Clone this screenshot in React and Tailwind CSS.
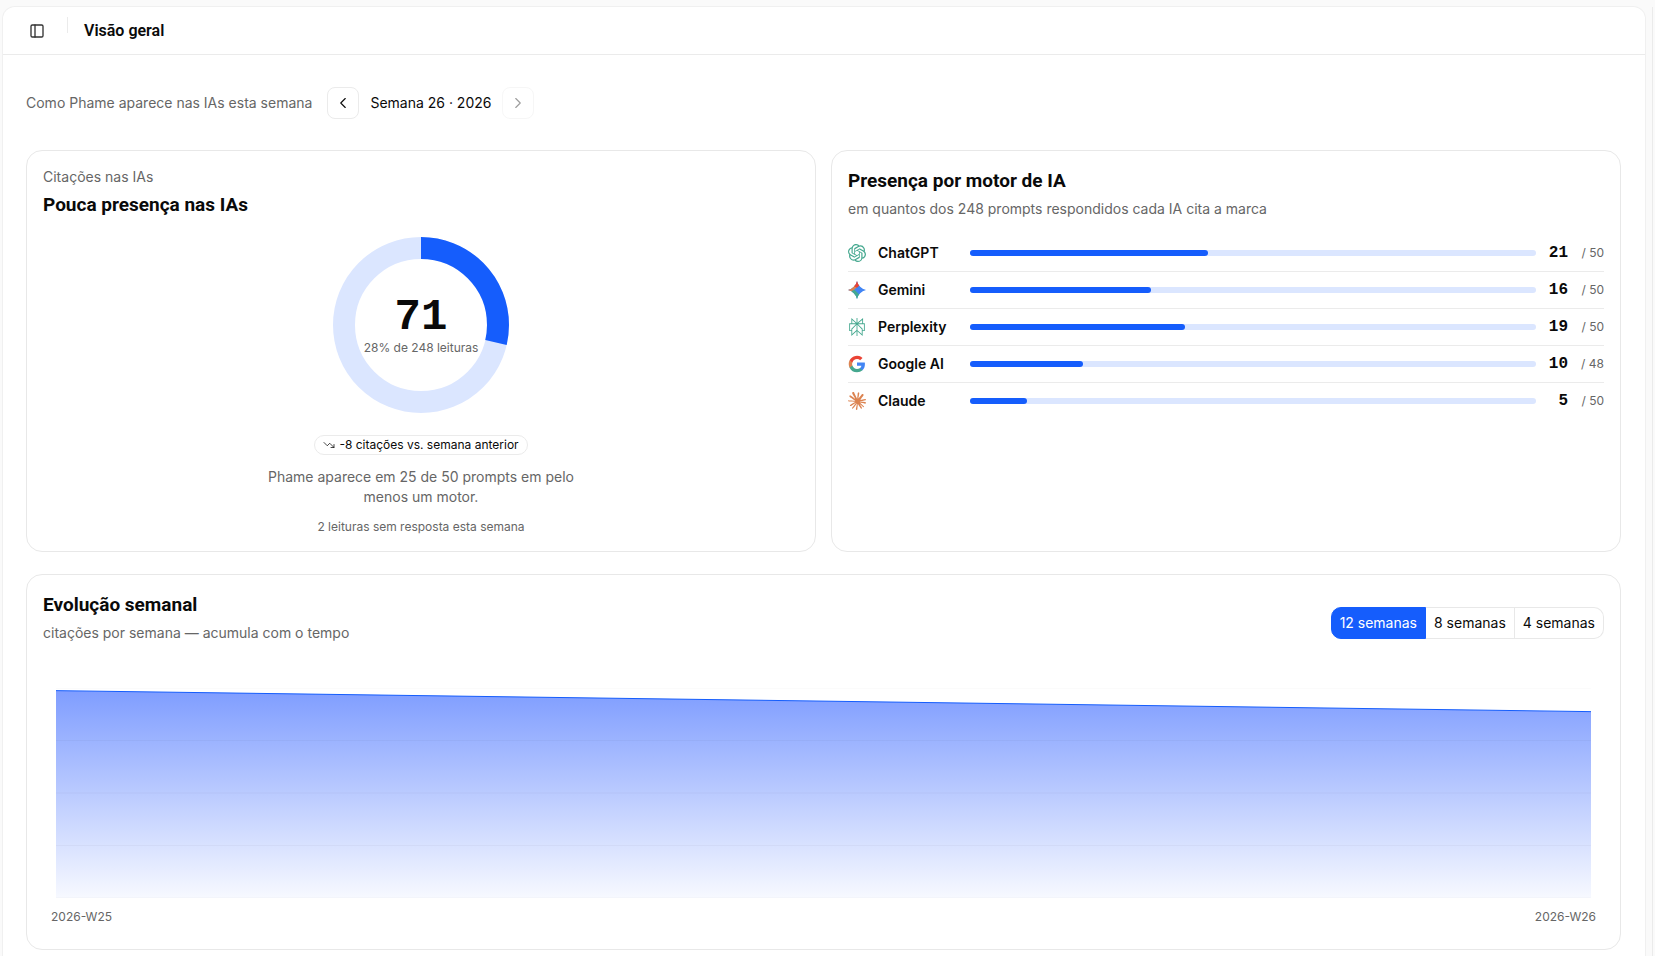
import React, { useState } from "react";
import { ChevronLeft, ChevronRight, PanelLeft, TrendingDown } from "lucide-react";
import { SiOpenai, SiPerplexity, SiClaude } from "react-icons/si";

const GoogleLogo = () => (
  <svg viewBox="0 0 24 24" className="size-[18px]">
    <path
      fill="#4285f4"
      d="M22.56 12.25c0-.78-.07-1.53-.2-2.25H12v4.26h5.92a5.06 5.06 0 0 1-2.2 3.32v2.77h3.57c2.08-1.92 3.27-4.74 3.27-8.1z"
    />
    <path
      fill="#45a88f"
      d="M12 23c2.97 0 5.46-.98 7.28-2.66l-3.57-2.77c-.98.66-2.23 1.06-3.71 1.06-2.86 0-5.29-1.93-6.16-4.53H2.18v2.84A11 11 0 0 0 12 23z"
    />
    <path
      fill="#dc8350"
      d="M5.84 14.09a6.6 6.6 0 0 1 0-4.18V7.07H2.18a11 11 0 0 0 0 9.86l3.66-2.84z"
    />
    <path
      fill="#ea4335"
      d="M12 5.38c1.62 0 3.06.56 4.21 1.64l3.15-3.15A11 11 0 0 0 2.18 7.07l3.66 2.84C6.71 7.31 9.14 5.38 12 5.38z"
    />
  </svg>
);

const GeminiLogo = () => (
  <svg viewBox="0 0 24 24" className="size-[18px]">
    <defs>
      <clipPath id="gemini-star">
        <path d="M12 0c1.6 6.3 5.7 10.4 12 12-6.300 1.600-10.400 5.700-12 12-1.600-6.300-5.700-10.400-12-12C6.300 10.400 10.400 6.300 12 0z" />
      </clipPath>
    </defs>
    <g clipPath="url(#gemini-star)">
      <path fill="#4285f4" d="M0 0h24v24H0z" />
      <path fill="#dc8350" d="M0 4h9l3 4-6 6H0z" />
      <path fill="#ea4335" d="M8 0h8v5l-4 4-4-2z" />
      <path fill="#45a88f" d="M5 13l4-1 6 6v6H8z" />
    </g>
  </svg>
);

const engines = [
  {
    name: "ChatGPT",
    cited: 21,
    total: 50,
    icon: <SiOpenai className="size-[18px] text-[#45a88f]" />,
  },
  { name: "Gemini", cited: 16, total: 50, icon: <GeminiLogo /> },
  {
    name: "Perplexity",
    cited: 19,
    total: 50,
    icon: <SiPerplexity className="size-[18px] text-[#45a88f]" />,
  },
  { name: "Google AI", cited: 10, total: 48, icon: <GoogleLogo /> },
  {
    name: "Claude",
    cited: 5,
    total: 50,
    icon: <SiClaude className="size-[18px] text-[#dc8350]" />,
  },
];

const MAX_PROMPTS = 50;

const Donut = ({ value, total }) => {
  const radius = 77;
  const circumference = 2 * Math.PI * radius;

  return (
    <div className="relative size-44">
      <svg viewBox="0 0 176 176" className="size-44 -rotate-90">
        <circle cx="88" cy="88" r={radius} fill="none" stroke="#dbe6ff" strokeWidth="22" />
        <circle
          cx="88"
          cy="88"
          r={radius}
          fill="none"
          stroke="#155dfc"
          strokeWidth="22"
          strokeDasharray={`${(circumference * value) / total} ${circumference}`}
        />
      </svg>
      <div className="absolute inset-0 flex flex-col items-center justify-center">
        <span className="font-['Liberation_Mono',monospace] text-[44px] leading-[46px] font-bold">
          {value}
        </span>
        <span className="text-xs text-[#666666]">
          {Math.floor((value / total) * 100)}% de {total} leituras
        </span>
      </div>
    </div>
  );
};

const WeeklyChart = ({ points }) => {
  const height = 210;
  const top = points.map((p) => height - (p.value / 80) * height);

  return (
    <svg
      viewBox={`0 0 1000 ${height}`}
      preserveAspectRatio="none"
      className="block h-[210px] w-full"
    >
      <defs>
        <linearGradient id="weekly-fill" x1="0" y1="0" x2="0" y2="1">
          <stop offset="0" stopColor="#7f9dff" />
          <stop offset="1" stopColor="#f7f9ff" />
        </linearGradient>
      </defs>
      <polygon
        points={`0,${top[0]} 1000,${top[1]} 1000,${height} 0,${height}`}
        fill="url(#weekly-fill)"
      />
      {[0, 1, 2, 3, 4].map((i) => (
        <line
          key={i}
          x1="0"
          x2="1000"
          y1={(i * height) / 4}
          y2={(i * height) / 4}
          stroke="#000000"
          strokeOpacity="0.03"
          vectorEffect="non-scaling-stroke"
        />
      ))}
      <line
        x1="0"
        y1={top[0]}
        x2="1000"
        y2={top[1]}
        stroke="#155dfc"
        vectorEffect="non-scaling-stroke"
      />
    </svg>
  );
};

const App = () => {
  const [range, setRange] = useState(12);

  return (
    <div className="flex min-h-screen bg-[#fafafa] pt-[7px] pr-[2px] pl-[3px] font-[Inter,sans-serif] text-[#0a0a0a]">
      <main className="min-w-0 flex-1 rounded-t-xl bg-white pb-6 ring-1 ring-[#f0f0f0]">
        {/* Top bar */}
        <header className="flex h-12 items-center border-b border-[#ebebeb] px-5">
          <button aria-label="Alternar menu" className="flex size-7 items-center justify-center">
            <PanelLeft className="size-4 text-[#333333]" />
          </button>
          <span className="mt-[10px] ml-4 h-4 w-px self-start bg-[#ebebeb]" />
          <h1 className="ml-4 font-[Roboto,sans-serif] text-base font-semibold">Visão geral</h1>
        </header>

        <div className="pt-8 pr-6 pl-[23px]">
          {/* Week picker */}
          <div className="flex items-center gap-[15px]">
            <p className="text-sm text-[#666666]">Como Phame aparece nas IAs esta semana</p>
            <div className="flex items-center gap-[11px]">
              <button
                aria-label="Semana anterior"
                className="flex size-8 items-center justify-center rounded-lg border border-[#ebebeb]"
              >
                <ChevronLeft strokeWidth={1.5} className="size-[18px]" />
              </button>
              <span className="text-sm">Semana 26 · 2026</span>
              <button
                aria-label="Próxima semana"
                disabled
                className="flex size-8 items-center justify-center rounded-lg border border-[#ebebeb] opacity-40"
              >
                <ChevronRight strokeWidth={1.5} className="size-[18px]" />
              </button>
            </div>
          </div>

          <div className="mt-[31px] grid grid-cols-2 gap-[15px]">
            {/* Citations */}
            <section className="rounded-2xl border border-[#e8e8e8] p-4">
              <p className="text-sm text-[#666666]">Citações nas IAs</p>
              <h2 className="mt-1 font-[Roboto,sans-serif] text-[19px] leading-7 font-bold">
                Pouca presença nas IAs
              </h2>
              <div className="mt-[18px] flex flex-col items-center text-center">
                <Donut value={71} total={248} />
                <span className="mt-[22px] flex h-5 items-center gap-1 rounded-full border border-[#ebebeb] px-2 text-xs">
                  <TrendingDown strokeWidth={1.5} className="size-3" />
                  -8 citações vs. semana anterior
                </span>
                <p className="mt-3 max-w-80 text-sm text-[#666666]">
                  Phame aparece em 25 de 50 prompts em pelo menos um motor.
                </p>
                <p className="mt-3 text-xs text-[#666666]">2 leituras sem resposta esta semana</p>
              </div>
            </section>

            {/* Engines */}
            <section className="rounded-2xl border border-[#e8e8e8] p-4">
              <h2 className="font-[Roboto,sans-serif] text-[19px] leading-7 font-bold">
                Presença por motor de IA
              </h2>
              <p className="mt-1 text-sm text-[#666666]">
                em quantos dos 248 prompts respondidos cada IA cita a marca
              </p>
              <ul className="mt-4 divide-y divide-[#ebebeb]">
                {engines.map((engine) => (
                  <li key={engine.name} className="flex h-[37px] items-center gap-3 last:h-9">
                    {engine.icon}
                    <span className="w-20 text-sm font-semibold">{engine.name}</span>
                    <div className="h-1.5 flex-1 rounded-full bg-[#dbe6ff]">
                      <div
                        className="h-full rounded-full bg-[#155dfc]"
                        style={{ width: `${(engine.cited / MAX_PROMPTS) * 100}%` }}
                      />
                    </div>
                    <span className="w-5 text-right font-['Liberation_Mono',monospace] text-base font-bold">
                      {engine.cited}
                    </span>
                    <span className="w-6 text-right text-xs whitespace-nowrap text-[#666666]">
                      / {engine.total}
                    </span>
                  </li>
                ))}
              </ul>
            </section>
          </div>

          {/* Weekly evolution */}
          <section className="mt-[22px] rounded-2xl border border-[#e8e8e8] p-4">
            <div className="flex items-start justify-between">
              <div>
                <h2 className="font-[Roboto,sans-serif] text-[19px] leading-7 font-bold">
                  Evolução semanal
                </h2>
                <p className="mt-1 text-sm text-[#666666]">
                  citações por semana — acumula com o tempo
                </p>
              </div>
              <div className="mt-4 flex h-8 text-sm">
                {[12, 8, 4].map((weeks) => (
                  <button
                    key={weeks}
                    onClick={() => setRange(weeks)}
                    className={`border-y border-r px-2 first:rounded-l-[10px] first:border-l last:rounded-r-[10px] ${
                      range === weeks
                        ? "border-[#155dfc] bg-[#155dfc] text-white"
                        : "border-[#e8e8e8]"
                    }`}
                  >
                    {weeks} semanas
                  </button>
                ))}
              </div>
            </div>
            <div className="mt-[45px] px-[13px]">
              <WeeklyChart
                points={[
                  { week: "2026-W25", value: 79 },
                  { week: "2026-W26", value: 71 },
                ]}
              />
            </div>
            <div className="mt-[11px] mb-2 flex justify-between px-2 text-xs text-[#666666]">
              <span>2026-W25</span>
              <span>2026-W26</span>
            </div>
          </section>
        </div>
      </main>
      <div className="ml-[7px] w-px bg-[#ebebeb]" />
    </div>
  );
};

export default App;
